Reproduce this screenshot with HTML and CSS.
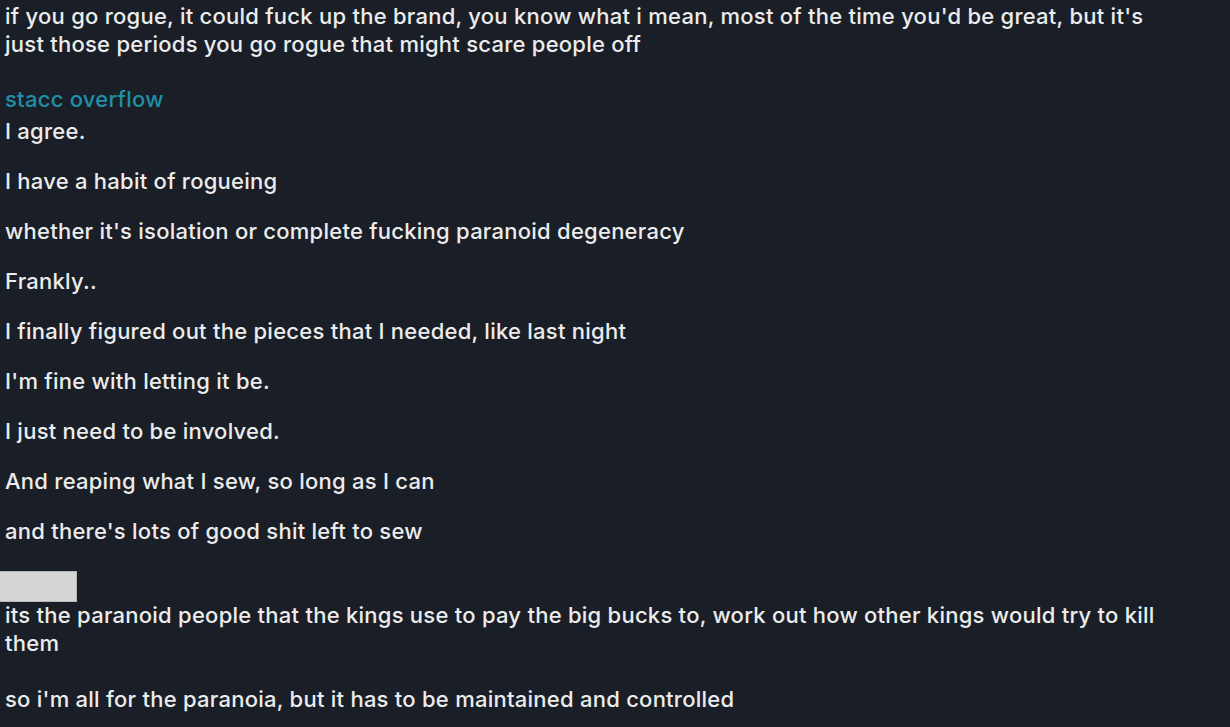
FILE: index.html
```html
<!DOCTYPE html>
<html>
<head>
<meta charset="utf-8">
<link rel="stylesheet" href="styles.css">
</head>
<body>
<div class="chat">
  <div class="group first">
    <p class="msg">if you go rogue, it could fuck up the brand, you know what i mean, most of the time you'd be great, but it's just those periods you go rogue that might scare people off</p>
  </div>
  <div class="group named">
    <div class="name">stacc overflow</div>
    <p class="msg top">I agree.</p>
    <p class="msg">I have a habit of rogueing</p>
    <p class="msg">whether it's isolation or complete fucking paranoid degeneracy</p>
    <p class="msg">Frankly..</p>
    <p class="msg">I finally figured out the pieces that I needed, like last night</p>
    <p class="msg">I'm fine with letting it be.</p>
    <p class="msg">I just need to be involved.</p>
    <p class="msg">And reaping what I sew, so long as I can</p>
    <p class="msg">and there's lots of good shit left to sew</p>
  </div>
  <div class="group redacted">
    <div class="blank"></div>
    <p class="msg top">its the paranoid people that the kings use to pay the big bucks to, work out how other kings would try to kill them</p>
    <p class="msg wide">so i'm all for the paranoia, but it has to be maintained and controlled</p>
  </div>
</div>
</body>
</html>
```
FILE: styles.css
```css
html, body {
  margin: 0;
  padding: 0;
  background: #1a1f27;
  height: 100%;
  overflow: hidden;
}
.chat {
  font-family: Inter, "Liberation Sans", Arial, sans-serif;
  font-size: 22px;
  font-weight: 500;
  letter-spacing: 0.25px;
  line-height: 28px;
  color: #ececec;
  padding: 2px 60px 0 5px;
}
.group { margin: 0; }
.msg {
  margin: 22px 0 0 0;
}
.msg.top { margin-top: 4px; }
.first .msg { margin-top: 0; }
.named { margin-top: 27px; }
.name {
  color: #1e90a8;
  height: 28px;
}
.redacted { margin-top: 26px; }
.blank {
  width: 76px;
  height: 29px;
  margin-left: -5px;
  margin-bottom: -1px;
  background: #d6d6d6;
  border: 1px solid #b8b8b8;
  border-left: none;
}
.redacted .msg.top { margin-top: 0; }
.msg.wide { margin-top: 28px; }
```
